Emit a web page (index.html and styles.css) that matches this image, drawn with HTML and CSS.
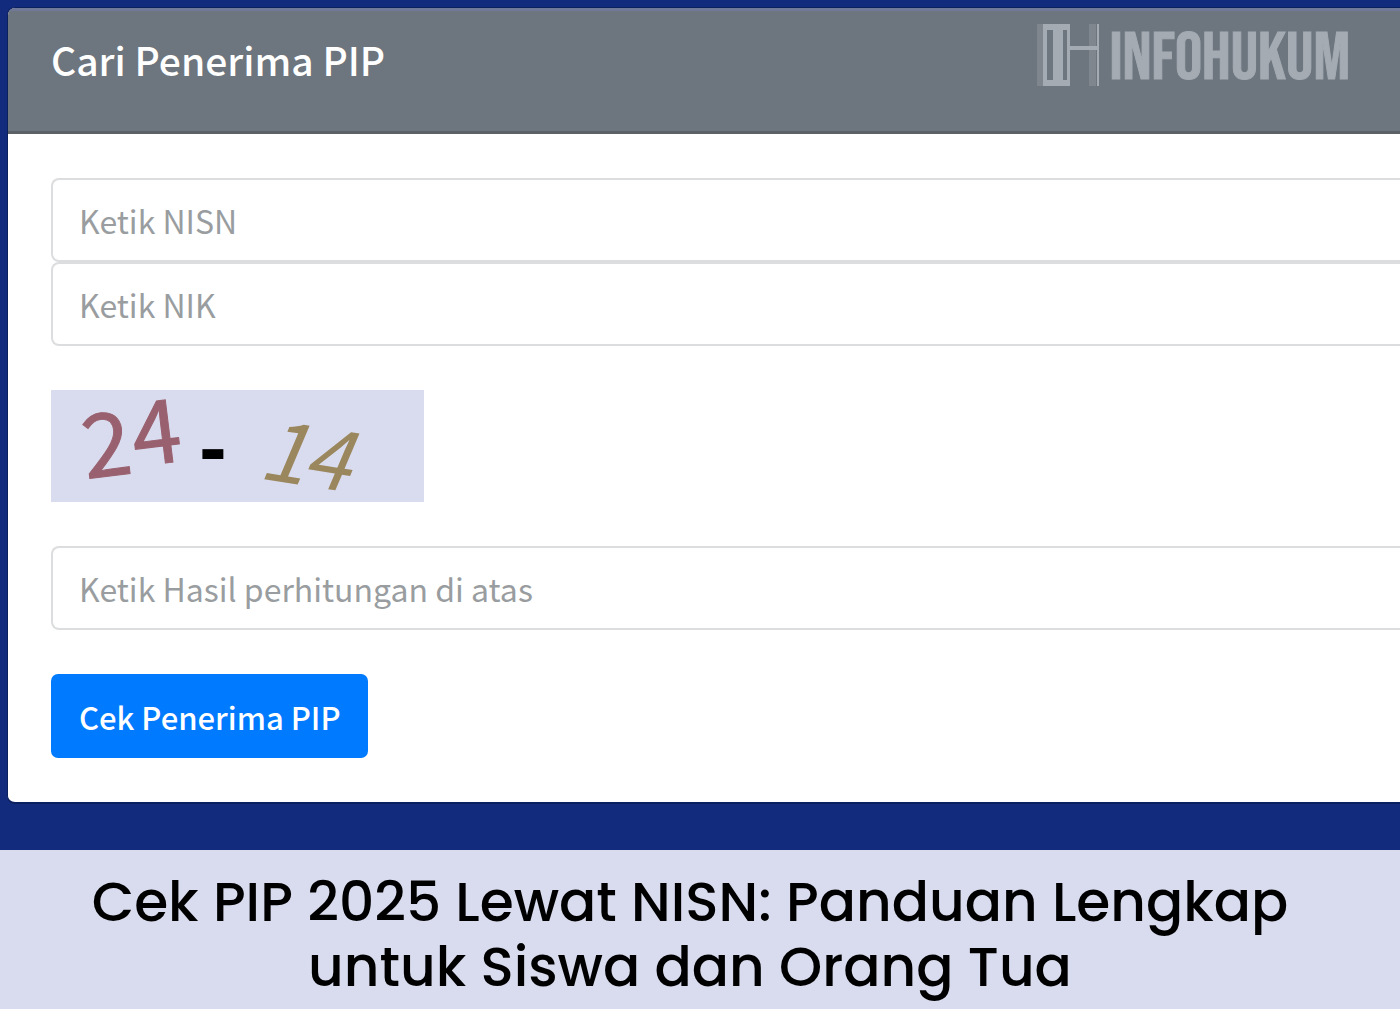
FILE: index.html
```html
<!DOCTYPE html>
<html lang="id">
<head>
<meta charset="utf-8">
<meta name="viewport" content="width=device-width, initial-scale=1">
<title>Cari Penerima PIP</title>
<link rel="stylesheet" href="styles.css">
</head>
<body>
<main class="stage">
  <section class="card">
    <header class="card-header">
      <h2 class="card-title">Cari Penerima PIP</h2>
      <div class="brand">
        <svg class="brand-mark" viewBox="0 0 64 62" aria-hidden="true">
          <path class="mark-shade" d="M0 0h6v62H0zM52 0h7v62h-7z"/>
          <path class="mark-solid" d="M6 0H33V22H60V0H62V62H60V26H33V62H6zM10 6V56H16V6zM26 6V56H30V6z" fill-rule="evenodd"/>
        </svg>
        <span class="brand-name">INFOHUKUM</span>
      </div>
    </header>
    <form class="card-body">
      <div class="field-group">
        <input class="field" type="text" placeholder="Ketik NISN" aria-label="NISN">
        <input class="field" type="text" placeholder="Ketik NIK" aria-label="NIK">
      </div>
      <svg class="captcha" viewBox="0 0 373 112" role="img" aria-label="24 - 14">
        <text class="digits red" transform="translate(35 89) rotate(-7)">2<tspan dx="2" dy="-6">4</tspan></text>
        <text class="minus" x="149" y="86">-</text>
        <text class="digits gold" transform="translate(206 88) rotate(9)">1<tspan dx="-3">4</tspan></text>
      </svg>
      <input class="field" type="text" placeholder="Ketik Hasil perhitungan di atas" aria-label="Hasil perhitungan">
      <button class="submit" type="button">Cek Penerima PIP</button>
    </form>
  </section>
</main>
<footer class="caption">
  <h1 class="caption-title">Cek PIP 2025 Lewat NISN: Panduan Lengkap untuk Siswa dan Orang Tua</h1>
</footer>
</body>
</html>
```
FILE: styles.css
```css
* { box-sizing: border-box; }

body {
  margin: 0;
  min-height: 100vh;
  display: flex;
  flex-direction: column;
  background: #d9dcee;
  font-family: "Source Sans Pro", "Noto Sans CJK SC", sans-serif;
}

.stage {
  padding: 7px 0 46px 7px;
  background: #122b7c;
}

.card {
  border: 1px solid #0b205f;
  border-right: 0;
  border-bottom-width: 2px;
  border-radius: 8px 0 0 8px;
  background: #fff;
  overflow: hidden;
}

.card-header {
  display: flex;
  justify-content: space-between;
  align-items: flex-start;
  height: 126px;
  padding: 13px 50px 0 43px;
  background: #6d757e;
  border-top: 3px solid #70799a;
  border-bottom: 3px solid #5b6167;
}

.card-title {
  margin: 0;
  padding-top: 11px;
  font-size: 39px;
  line-height: 48px;
  font-weight: 500;
  color: #fff;
}

.brand {
  display: flex;
  align-items: center;
  gap: 8px;
  height: 62px;
  color: #a5abb2;
}

.brand-mark { width: 64px; height: 62px; }
.mark-shade { fill: #7f868e; }
.mark-solid { fill: #a5abb2; }

.brand-name {
  padding-top: 8px;
  font-family: "Bebas Neue", "Oswald", "Roboto Condensed", "Liberation Sans Narrow", sans-serif;
  font-size: 68px;
  line-height: 62px;
  font-weight: 400;
  -webkit-text-stroke: 1px #a5abb2;
}

.card-body {
  display: flex;
  flex-direction: column;
  align-items: flex-start;
  gap: 44px;
  padding: 44px 0 44px 43px;
}

.field-group { width: 100%; }

.field {
  display: block;
  width: 100%;
  height: 84px;
  padding: 0 26px;
  border: 2px solid #dcdddf;
  border-right: 0;
  border-radius: 8px 0 0 8px;
  background: #fff;
  font: 400 32px "Source Sans Pro", "Noto Sans CJK SC", sans-serif;
  color: #495057;
}

.field::placeholder { color: #999d9f; opacity: 1; }

.captcha {
  width: 373px;
  height: 112px;
  background: #d9dcef;
  overflow: visible;
}

.digits { font: 400 84px "Noto Sans CJK SC", sans-serif; }
.red { fill: #99616f; font-size: 88px; stroke: #99616f; stroke-width: 1px; }
.gold { fill: #9b875e; font-style: italic; }
.minus { font: 700 80px "Open Sans", sans-serif; fill: #000; }

.submit {
  height: 84px;
  padding: 0 28px;
  border: 0;
  border-radius: 7px;
  background: #007bff;
  color: #fff;
  font: 500 31px "Source Sans Pro", "Noto Sans CJK SC", sans-serif;
}

.caption {
  flex: 1;
  padding: 19px 60px 10px 40px;
  text-align: center;
}

.caption-title {
  margin: 0;
  font-family: "Poppins", "Inter", sans-serif;
  font-size: 55px;
  line-height: 65px;
  font-weight: 500;
  color: #000;
}
```
